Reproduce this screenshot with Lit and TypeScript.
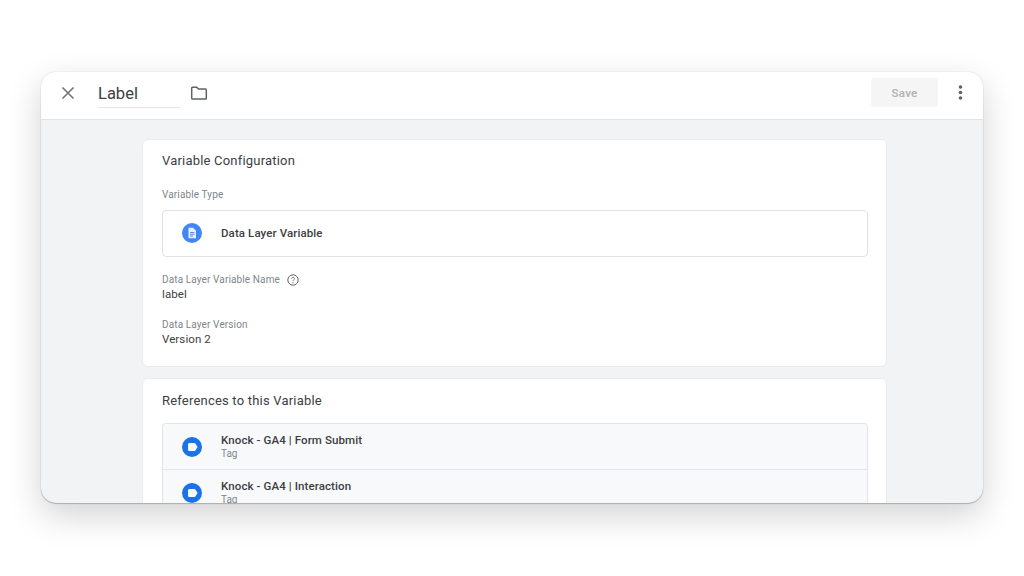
import { LitElement, html, css } from "lit";
import { customElement } from "lit/decorators.js";

@customElement("app-root")
export class AppRoot extends LitElement {
  static styles = css`
    :host { display: block; width: 1024px; height: 576px; box-sizing: border-box; padding: 72px 41px 73px; background: #fff; font-family: Roboto, "Liberation Sans", sans-serif; color: #3c4043; overflow: hidden; }
    .window { height: 431px; border-radius: 15px; overflow: hidden; background: #f1f3f5; display: flex; flex-direction: column; box-shadow: 0 0 1px rgba(0,0,0,.3), 0 1px 1px rgba(0,0,0,.2), 0 12px 34px rgba(0,0,0,.18); }
    .toolbar { flex: none; height: 48px; box-sizing: border-box; padding-bottom: 6px; background: #fff; border-bottom: 1px solid #e3e5e8; display: flex; align-items: center; }
    .close { margin-left: 20px; width: 14px; height: 14px; flex: none; }
    .name { margin-left: 23px; width: 82px; height: 29px; box-sizing: border-box; border-bottom: 1px solid #e3e5e8; font-size: 16.5px; line-height: 30px; color: #3c4043; margin-top: 1px; }
    .folder { margin-left: 10px; width: 18px; height: 18px; flex: none; }
    .spacer { flex: 1; }
    .save { width: 67px; height: 29px; background: #f5f5f5; border-radius: 3px; color: #b0b0b0; font-size: 11.5px; font-weight: 500; letter-spacing: .3px; display: flex; align-items: center; justify-content: center; }
    .more { margin: 0 20px 0 20px; width: 5px; height: 15px; flex: none; }
    .content { flex: 1; min-height: 0; overflow: hidden; padding: 19px 96px 0 101px; display: flex; flex-direction: column; gap: 11px; }
    .card { flex: none; background: #fff; border: 1px solid #e8eaed; border-radius: 6px; padding: 13px 18px 0 19px; box-sizing: border-box; }
    .first { height: 228px; }
    .second { height: 160px; padding-top: 14px; }
    h2 { margin: 0; font-size: 13px; line-height: 16px; font-weight: 400; color: #3c4043; letter-spacing: .2px; }
    .caption { font-size: 10px; line-height: 12px; color: #80868b; letter-spacing: .12px; }
    .type-label { margin-top: 20px; }
    .type { margin-top: 9px; height: 47px; box-sizing: border-box; padding-bottom: 2px; border: 1px solid #dfe1e5; border-radius: 4px; display: flex; align-items: center; padding-left: 19px; gap: 19px; }
    .icon { width: 20px; height: 20px; flex: none; display: block; }
    .strong { font-size: 11.5px; font-weight: 500; color: #3c4043; letter-spacing: .1px; line-height: 14px; }
    .field-label { display: flex; align-items: center; gap: 7px; }
    .help { width: 12px; height: 12px; flex: none; }
    .name-label { margin-top: 17px; }
    .value { font-size: 11.5px; line-height: 14px; color: #3c4043; margin-top: 1px; letter-spacing: .1px; }
    .version-label { margin-top: 18px; }
    .list { margin-top: 14px; border: 1px solid #e3e5e8; border-bottom: 0; border-radius: 4px 4px 0 0; background: #f8f9fa; }
    .row { height: 45px; box-sizing: border-box; display: flex; align-items: center; padding-left: 19px; gap: 19px; }
    .row + .row { border-top: 1px solid #e3e5e8; height: 46px; }
    .tag { font-size: 10px; line-height: 12px; color: #80868b; margin-top: 1px; }
  `;

  private tagIcon() {
    return html`<svg class="icon" viewBox="0 0 20 20"><circle cx="10" cy="10" r="10" fill="#1a73e8"/><path d="M6 7.600C6 6.700 6.700 6 7.600 6h4.600c.5 0 .9.2 1.200.6L15.600 10l-2.200 3.400c-.3.4-.7.6-1.200.6H7.600C6.700 14 6 13.300 6 12.400z" fill="#f8f9fa"/></svg>`;
  }

  private row(title: string) {
    return html`<div class="row">${this.tagIcon()}<div><div class="strong">${title}</div><div class="tag">Tag</div></div></div>`;
  }

  render() {
    return html`
      <div class="window">
        <div class="toolbar">
          <svg class="close" viewBox="0 0 14 14"><path d="M1.500 1.500l11 11M12.500 1.500l-11 11" stroke="#70757a" stroke-width="1.600" fill="none"/></svg>
          <div class="name">Label</div>
          <svg class="folder" viewBox="0 0 18 18"><path d="M1.800 3.200h5l1.600 1.700h7.100c.5 0 .8.4.8.8v8.500c0 .5-.3.8-.8.8H2.500c-.5 0-.8-.3-.8-.8V4c0-.5.3-.8.800-.8z" fill="none" stroke="#5f6368" stroke-width="1.500"/></svg>
          <div class="spacer"></div>
          <div class="save">Save</div>
          <svg class="more" viewBox="0 0 5 15"><circle cx="2.500" cy="2" r="1.800" fill="#5f6368"/><circle cx="2.500" cy="7.500" r="1.800" fill="#5f6368"/><circle cx="2.500" cy="13" r="1.800" fill="#5f6368"/></svg>
        </div>
        <div class="content">
          <section class="card first">
            <h2>Variable Configuration</h2>
            <div class="caption type-label">Variable Type</div>
            <div class="type">
              <svg class="icon" viewBox="0 0 20 20"><circle cx="10" cy="10" r="10" fill="#4285f4"/><path d="M6.500 4.800h4.600l2.900 2.900v7.500H6.500z" fill="#e8f0fe"/><path d="M8 9.500h4.500M8 11.300h4.500M8 13h3" stroke="#4285f4" stroke-width=".9"/></svg>
              <div class="strong">Data Layer Variable</div>
            </div>
            <div class="caption field-label name-label">
              <span>Data Layer Variable Name</span>
              <svg class="help" viewBox="0 0 12 12"><circle cx="6" cy="6" r="5.200" fill="none" stroke="#5f6368" stroke-width="1"/><path d="M4.500 4.700c0-.9.700-1.400 1.500-1.400s1.500.5 1.500 1.300c0 1.100-1.500 1.100-1.500 2.300" fill="none" stroke="#5f6368" stroke-width=".9"/><circle cx="6" cy="8.700" r=".6" fill="#5f6368"/></svg>
            </div>
            <div class="value">label</div>
            <div class="caption version-label">Data Layer Version</div>
            <div class="value">Version 2</div>
          </section>
          <section class="card second">
            <h2>References to this Variable</h2>
            <div class="list">
              ${this.row("Knock - GA4 | Form Submit")}
              ${this.row("Knock - GA4 | Interaction")}
            </div>
          </section>
        </div>
      </div>
    `;
  }
}
